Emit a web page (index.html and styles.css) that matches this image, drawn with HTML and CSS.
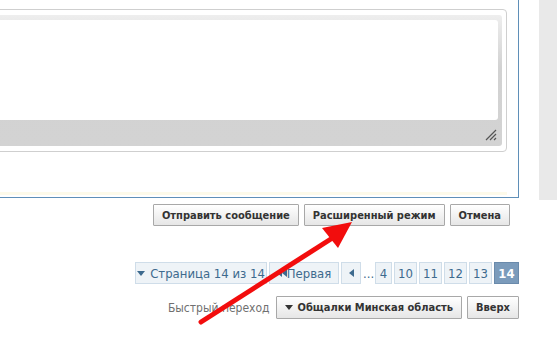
FILE: index.html
```html
<!DOCTYPE html>
<html lang="ru">
<head>
    <meta charset="UTF-8">
    <meta name="viewport" content="width=device-width, initial-scale=1.0">
    <title>Ответ в теме</title>
    <link rel="stylesheet" href="styles.css">
</head>
<body>
    <div class="page">
        <div class="main">
            <div class="editor">
                <div class="editor-box">
                    <div class="textarea-wrap">
                        <div class="textarea"></div>
                        <svg class="grip" width="12" height="12" viewBox="0 0 12 12">
                            <path d="M11 1 L1 11 M11 5 L5 11 M11 9 L9 11" stroke="#555" stroke-width="1.2"/>
                        </svg>
                    </div>
                </div>
                <div class="editor-foot"></div>
            </div>

            <div class="actions">
                <button class="btn">Отправить сообщение</button>
                <button class="btn">Расширенный режим</button>
                <button class="btn">Отмена</button>
            </div>

            <div class="pagenav">
                <span class="pg pg-menu"><span class="tri-down"></span>Страница 14 из 14</span>
                <span class="pg pg-first"><span class="tri-left"></span><span class="tri-left"></span>Первая</span>
                <span class="pg pg-prev"><span class="tri-left"></span></span>
                <span class="dots">...</span>
                <span class="pg pg-num narrow">4</span>
                <span class="pg pg-num">10</span>
                <span class="pg pg-num">11</span>
                <span class="pg pg-num">12</span>
                <span class="pg pg-num">13</span>
                <span class="pg pg-num current">14</span>
            </div>

            <div class="quicknav">
                <span class="quick-label">Быстрый переход</span>
                <button class="btn btn-tall"><span class="tri-down dark"></span>Общалки Минская область</button>
                <button class="btn btn-tall">Вверх</button>
            </div>
        </div>
        <div class="side"></div>

        <svg class="arrow" width="557" height="337" viewBox="0 0 557 337">
            <line x1="201" y1="322" x2="334" y2="237" stroke="#f20d0d" stroke-width="5" stroke-linecap="round"/>
            <polygon points="352,222 322,228 338,248" fill="#f20d0d"/>
        </svg>
    </div>
</body>
</html>
```

FILE: styles.css
```css
body {
    margin: 0;
    background-color: #ffffff;
    font-family: "DejaVu Sans Condensed", "DejaVu Sans", Verdana, sans-serif;
    overflow: hidden;
}

.page {
    position: relative;
    width: 557px;
    height: 337px;
    display: flex;
}

.main {
    width: 519px;
}

.side {
    width: 18px;
    height: 200px;
    margin-left: 20px;
    background-color: #e9e9e9;
}

/* editor frame */
.editor {
    height: 198px;
    margin-left: -12px;
    padding: 9px 11px 0 0;
    box-sizing: border-box;
    border-right: 1px solid #5f8fb8;
    border-bottom: 1px solid #5f8fb8;
    display: flex;
    flex-direction: column;
}

.editor-box {
    height: 143px;
    box-sizing: border-box;
    border: 1px solid #cfcfcf;
    border-radius: 4px;
    padding: 5px 4px 5px 0;
}

.textarea-wrap {
    position: relative;
    height: 131px;
    box-sizing: border-box;
    padding: 5px 4px 25px 0;
    border-radius: 3px;
    background: linear-gradient(#eeeeee, #d2d2d2 40%, #d3d3d3);
}

.textarea {
    height: 100px;
    background-color: #ffffff;
    border-radius: 0 3px 3px 0;
}

.grip {
    position: absolute;
    right: 5px;
    bottom: 5px;
}

.editor-foot {
    margin-top: auto;
    height: 3px;
    margin-bottom: 2px;
    background-color: #fdfaea;
}

/* buttons */
.btn {
    height: 22px;
    padding: 0 8px;
    font-family: "DejaVu Sans Condensed", "DejaVu Sans", Verdana, sans-serif;
    font-size: 11px;
    font-weight: bold;
    color: #333333;
    background: linear-gradient(#ffffff, #e6e6e6);
    border: 1px solid #a8a8a8;
    border-radius: 1px;
    display: flex;
    align-items: center;
}

.actions {
    display: flex;
    justify-content: flex-end;
    gap: 5px;
    margin-top: 6px;
    padding-right: 9px;
}

/* pages */
.pagenav {
    display: flex;
    justify-content: flex-end;
    align-items: center;
    gap: 2px;
    margin-top: 36px;
}

.pg {
    height: 22px;
    box-sizing: border-box;
    display: flex;
    align-items: center;
    justify-content: center;
    font-size: 13px;
    color: #3d6a8e;
    background-color: #eef3f7;
    border: 1px solid #cfdde9;
}

.pg-menu {
    width: 132px;
}

.pg-first {
    width: 70px;
}

.pg-prev {
    width: 20px;
}

.pg-num {
    width: 23px;
}

.pg-num.narrow {
    width: 17px;
}

.pg.current {
    background-color: #7b9bbb;
    border-color: #6a8aab;
    color: #ffffff;
    font-weight: bold;
    width: 25px;
}

.dots {
    width: 10px;
    font-size: 13px;
    color: #3d6a8e;
    text-align: center;
}

.tri-down {
    width: 0;
    height: 0;
    border-left: 4px solid transparent;
    border-right: 4px solid transparent;
    border-top: 5px solid #3d6a8e;
    margin-right: 5px;
}

.tri-down.dark {
    border-top-color: #333333;
}

.tri-left {
    width: 0;
    height: 0;
    border-top: 4px solid transparent;
    border-bottom: 4px solid transparent;
    border-right: 5px solid #3d6a8e;
}

/* quick navigation */
.quicknav {
    display: flex;
    justify-content: flex-end;
    align-items: center;
    gap: 5px;
    margin-top: 12px;
}

.quick-label {
    font-size: 12px;
    color: #707070;
    margin-right: 1px;
}

.btn-tall {
    height: 23px;
}

.arrow {
    position: absolute;
    left: 0;
    top: 0;
    pointer-events: none;
}
```
